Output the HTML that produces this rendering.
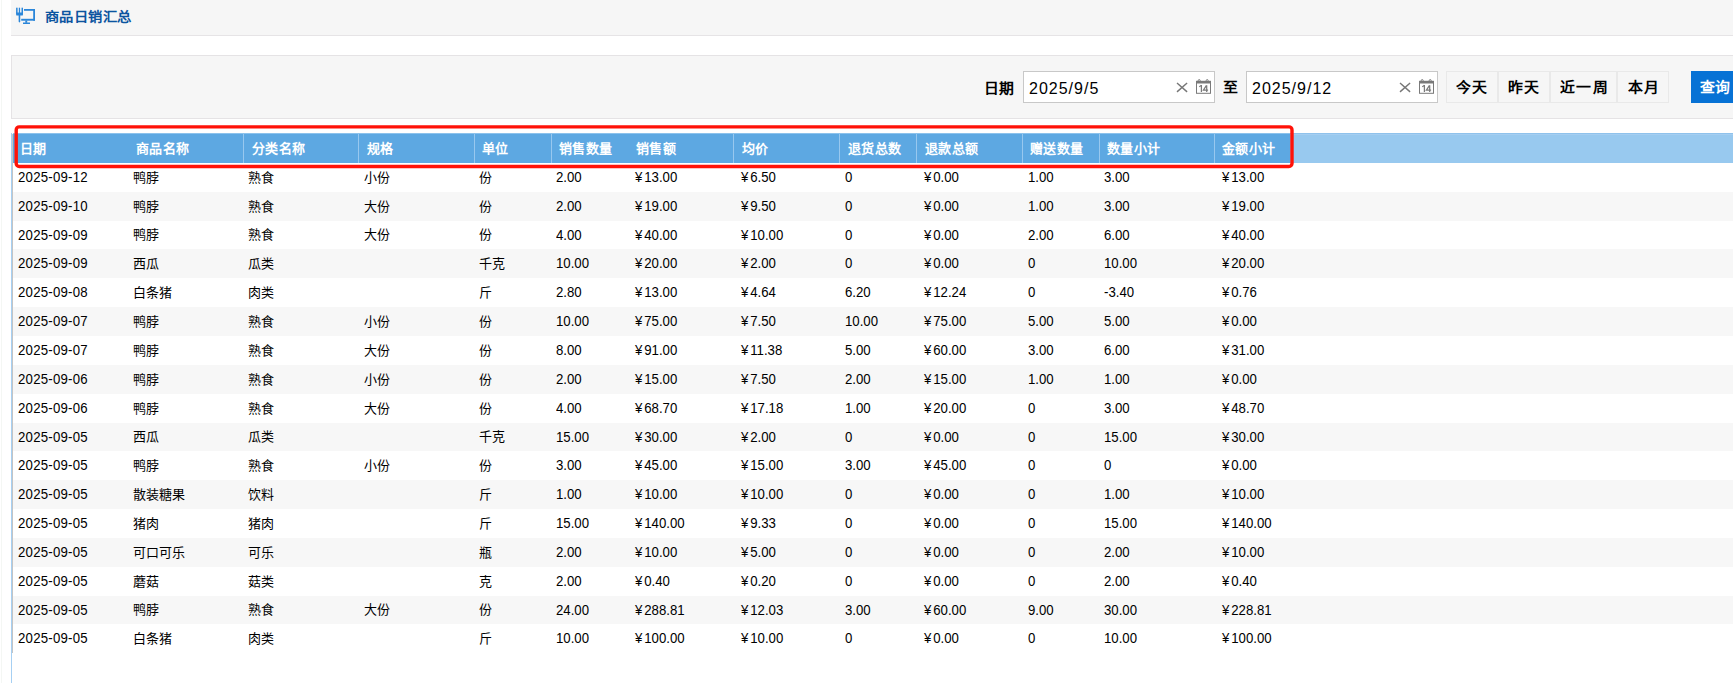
<!DOCTYPE html><html lang="zh-CN"><head><meta charset="utf-8"><style>
*{margin:0;padding:0;box-sizing:border-box}
html,body{width:1733px;height:683px;overflow:hidden;background:#fff}
body{position:relative;font-family:"Liberation Sans",sans-serif;color:#000}
.abs{position:absolute}
#edge{left:1px;top:0;width:1px;height:683px;background:#f4f7f4}
#hdr{left:11px;top:0;width:1722px;height:36px;background:#f6f6f6;border-bottom:1px solid #e6e4e6}
#title{left:44.5px;top:8.5px;letter-spacing:0.1px;transform:scaleX(1.1);transform-origin:0 0;font-size:13px;font-weight:900;color:#0c55a0;line-height:16px;white-space:nowrap}
#panel{left:11px;top:55px;width:1740px;height:64px;background:#f6f6f6;border:1px solid #e5e3e5}
.lbl{font-size:13.5px;letter-spacing:0.8px;transform:scaleX(1.1);transform-origin:0 0;font-weight:bold;line-height:16px;white-space:nowrap}
.inp{height:32px;width:192px;background:#fff;border:1px solid #c8c8c8}
.inp span{position:absolute;left:5px;top:8px;letter-spacing:1px;font-size:16px;line-height:18px;color:#000;white-space:nowrap}
.btn{top:71px;height:32px;background:#f6f6f6;border:1px solid #e9e9e9}
.bt{top:80px;font-size:13.5px;letter-spacing:1.8px;transform:scaleX(1.1);transform-origin:0 0;font-weight:bold;line-height:16px;white-space:nowrap}
#q{left:1691px;top:71px;width:60px;height:32px;background:#0772d5}
#qt{left:1700px;top:79.5px;color:#fff;letter-spacing:0.8px;transform:scaleX(1.1);transform-origin:0 0;font-size:13.5px;font-weight:bold;line-height:16px;white-space:nowrap}
#lb1{left:11px;top:133px;width:1px;height:550px;background:#a6d0f3}
#lb2{left:12px;top:134px;width:1px;height:519px;background:#c4c4c4}
#th{left:13px;top:133px;width:1277px;height:30px;background:#5da8e2;border-top:1px solid #8cc2ec}
#thx{left:1290px;top:133px;width:443px;height:30px;background:#98c9ef;border-top:1px solid #8fc2ec;box-shadow:inset 0 1px 0 #a5cef1}
.sep{top:134px;width:1px;height:29px;background:#98c8ef}
.ht{top:141.2px;letter-spacing:0.4px;font-size:13px;font-weight:900;color:#fff;line-height:15px;white-space:nowrap}

i{font-style:normal;margin-right:2px}
.zebra{left:13px;width:1720px;background:#f7f7f7}
.c{font-size:13px;}.n{font-size:14px;transform:scaleX(0.943);transform-origin:0 0}.c{line-height:15px;white-space:nowrap;color:#000}
</style></head><body>
<div class="abs" id="edge"></div>
<div class="abs" id="hdr"></div>
<svg class="abs" style="left:10px;top:2px" width="30" height="30" viewBox="0 0 30 30">
<g fill="#2b86d9">
<rect x="6.1" y="5.7" width="1.5" height="6"/><rect x="8.8" y="5.7" width="1.3" height="6"/><rect x="11.5" y="5.7" width="1.5" height="6"/>
<path d="M6.1 10.5H13V12.4A1.2 1.2 0 0 1 11.8 13.6H7.3A1.2 1.2 0 0 1 6.1 12.4Z"/>
<path d="M8.65 13H10.25V19.6A0.8 0.8 0 0 1 8.65 19.6Z"/>
<rect x="14" y="7" width="11" height="1.8"/><rect x="23.2" y="7" width="1.8" height="11.7"/><rect x="11.2" y="16.8" width="13.8" height="1.9"/>
<rect x="15.3" y="18.5" width="1.9" height="2.3"/><rect x="13" y="20.5" width="7" height="1.5"/>
</g></svg>
<div class="abs" id="title">商品日销汇总</div>
<div class="abs" id="panel"></div>
<div class="abs lbl" style="left:984px;top:80.5px">日期</div>
<div class="abs inp" style="left:1023px;top:71px"><span>2025/9/5</span><svg class="abs" style="left:152px;top:10px" width="12" height="11" viewBox="0 0 12 11"><path d="M1 1L11.1 9.9M11.1 1L1 9.9" stroke="#777" stroke-width="1.4" fill="none"/></svg><svg class="abs" style="left:171px;top:7px" width="17" height="16" viewBox="0 0 17 16"><rect x="1.5" y="2.4" width="14" height="11.9" fill="none" stroke="#7a7a7a" stroke-width="1"/><rect x="1" y="1.9" width="15" height="2.6" fill="#7a7a7a"/><rect x="3.2" y="0.6" width="2" height="2.8" rx="1" fill="none" stroke="#7a7a7a" stroke-width="1"/><rect x="11.2" y="0.6" width="2" height="2.8" rx="1" fill="none" stroke="#7a7a7a" stroke-width="1"/><path d="M6.4 6.1V13M4.3 7.9L6.4 6.1M11.7 6.3V13M11.5 6.3L8.4 11.1H13.1" fill="none" stroke="#7a7a7a" stroke-width="1.25"/></svg></div>
<div class="abs lbl" style="left:1223px;top:80px">至</div>
<div class="abs inp" style="left:1246px;top:71px"><span>2025/9/12</span><svg class="abs" style="left:152px;top:10px" width="12" height="11" viewBox="0 0 12 11"><path d="M1 1L11.1 9.9M11.1 1L1 9.9" stroke="#777" stroke-width="1.4" fill="none"/></svg><svg class="abs" style="left:171px;top:7px" width="17" height="16" viewBox="0 0 17 16"><rect x="1.5" y="2.4" width="14" height="11.9" fill="none" stroke="#7a7a7a" stroke-width="1"/><rect x="1" y="1.9" width="15" height="2.6" fill="#7a7a7a"/><rect x="3.2" y="0.6" width="2" height="2.8" rx="1" fill="none" stroke="#7a7a7a" stroke-width="1"/><rect x="11.2" y="0.6" width="2" height="2.8" rx="1" fill="none" stroke="#7a7a7a" stroke-width="1"/><path d="M6.4 6.1V13M4.3 7.9L6.4 6.1M11.7 6.3V13M11.5 6.3L8.4 11.1H13.1" fill="none" stroke="#7a7a7a" stroke-width="1.25"/></svg></div>
<div class="abs btn" style="left:1446px;width:52px"></div>
<div class="abs bt" style="left:1455.5px">今天</div>
<div class="abs btn" style="left:1498px;width:52px"></div>
<div class="abs bt" style="left:1507.5px">昨天</div>
<div class="abs btn" style="left:1550px;width:67px"></div>
<div class="abs bt" style="left:1560.0px">近一周</div>
<div class="abs btn" style="left:1617px;width:52px"></div>
<div class="abs bt" style="left:1627.5px">本月</div>
<div class="abs" id="q"></div><div class="abs" id="qt">查询</div>
<div class="abs zebra" style="top:192px;height:29px"></div>
<div class="abs zebra" style="top:249px;height:29px"></div>
<div class="abs zebra" style="top:307px;height:29px"></div>
<div class="abs zebra" style="top:365px;height:29px"></div>
<div class="abs zebra" style="top:423px;height:28px"></div>
<div class="abs zebra" style="top:480px;height:29px"></div>
<div class="abs zebra" style="top:538px;height:29px"></div>
<div class="abs zebra" style="top:596px;height:28px"></div>
<div class="abs" id="lb1"></div><div class="abs" id="lb2"></div>
<div class="abs" id="th"></div><div class="abs" id="thx"></div>
<div class="abs sep" style="left:243px"></div>
<div class="abs sep" style="left:358px"></div>
<div class="abs sep" style="left:474px"></div>
<div class="abs sep" style="left:551px"></div>
<div class="abs sep" style="left:733px"></div>
<div class="abs sep" style="left:839px"></div>
<div class="abs sep" style="left:916px"></div>
<div class="abs sep" style="left:1022px"></div>
<div class="abs sep" style="left:1099px"></div>
<div class="abs sep" style="left:1214px"></div>
<div class="abs ht" style="left:20px">日期</div>
<div class="abs ht" style="left:136px">商品名称</div>
<div class="abs ht" style="left:252px">分类名称</div>
<div class="abs ht" style="left:367px">规格</div>
<div class="abs ht" style="left:482px">单位</div>
<div class="abs ht" style="left:559px">销售数量</div>
<div class="abs ht" style="left:636px">销售额</div>
<div class="abs ht" style="left:742px">均价</div>
<div class="abs ht" style="left:848px">退货总数</div>
<div class="abs ht" style="left:925px">退款总额</div>
<div class="abs ht" style="left:1030px">赠送数量</div>
<div class="abs ht" style="left:1107px">数量小计</div>
<div class="abs ht" style="left:1222px">金额小计</div>
<div class="abs c n" style="left:18px;top:170.00px;letter-spacing:0.25px">2025-09-12</div>
<div class="abs c k" style="left:133px;top:169.60px">鸭脖</div>
<div class="abs c k" style="left:248px;top:169.60px">熟食</div>
<div class="abs c k" style="left:364px;top:169.60px">小份</div>
<div class="abs c k" style="left:479px;top:169.60px">份</div>
<div class="abs c n" style="left:556px;top:170.00px">2.00</div>
<div class="abs c n" style="left:635px;top:170.00px"><i>¥</i>13.00</div>
<div class="abs c n" style="left:741px;top:170.00px"><i>¥</i>6.50</div>
<div class="abs c n" style="left:845px;top:170.00px">0</div>
<div class="abs c n" style="left:924px;top:170.00px"><i>¥</i>0.00</div>
<div class="abs c n" style="left:1028px;top:170.00px">1.00</div>
<div class="abs c n" style="left:1104px;top:170.00px">3.00</div>
<div class="abs c n" style="left:1222px;top:170.00px"><i>¥</i>13.00</div>
<div class="abs c n" style="left:18px;top:199.00px;letter-spacing:0.25px">2025-09-10</div>
<div class="abs c k" style="left:133px;top:198.60px">鸭脖</div>
<div class="abs c k" style="left:248px;top:198.60px">熟食</div>
<div class="abs c k" style="left:364px;top:198.60px">大份</div>
<div class="abs c k" style="left:479px;top:198.60px">份</div>
<div class="abs c n" style="left:556px;top:199.00px">2.00</div>
<div class="abs c n" style="left:635px;top:199.00px"><i>¥</i>19.00</div>
<div class="abs c n" style="left:741px;top:199.00px"><i>¥</i>9.50</div>
<div class="abs c n" style="left:845px;top:199.00px">0</div>
<div class="abs c n" style="left:924px;top:199.00px"><i>¥</i>0.00</div>
<div class="abs c n" style="left:1028px;top:199.00px">1.00</div>
<div class="abs c n" style="left:1104px;top:199.00px">3.00</div>
<div class="abs c n" style="left:1222px;top:199.00px"><i>¥</i>19.00</div>
<div class="abs c n" style="left:18px;top:227.50px;letter-spacing:0.25px">2025-09-09</div>
<div class="abs c k" style="left:133px;top:227.10px">鸭脖</div>
<div class="abs c k" style="left:248px;top:227.10px">熟食</div>
<div class="abs c k" style="left:364px;top:227.10px">大份</div>
<div class="abs c k" style="left:479px;top:227.10px">份</div>
<div class="abs c n" style="left:556px;top:227.50px">4.00</div>
<div class="abs c n" style="left:635px;top:227.50px"><i>¥</i>40.00</div>
<div class="abs c n" style="left:741px;top:227.50px"><i>¥</i>10.00</div>
<div class="abs c n" style="left:845px;top:227.50px">0</div>
<div class="abs c n" style="left:924px;top:227.50px"><i>¥</i>0.00</div>
<div class="abs c n" style="left:1028px;top:227.50px">2.00</div>
<div class="abs c n" style="left:1104px;top:227.50px">6.00</div>
<div class="abs c n" style="left:1222px;top:227.50px"><i>¥</i>40.00</div>
<div class="abs c n" style="left:18px;top:256.00px;letter-spacing:0.25px">2025-09-09</div>
<div class="abs c k" style="left:133px;top:255.60px">西瓜</div>
<div class="abs c k" style="left:248px;top:255.60px">瓜类</div>
<div class="abs c k" style="left:479px;top:255.60px">千克</div>
<div class="abs c n" style="left:556px;top:256.00px">10.00</div>
<div class="abs c n" style="left:635px;top:256.00px"><i>¥</i>20.00</div>
<div class="abs c n" style="left:741px;top:256.00px"><i>¥</i>2.00</div>
<div class="abs c n" style="left:845px;top:256.00px">0</div>
<div class="abs c n" style="left:924px;top:256.00px"><i>¥</i>0.00</div>
<div class="abs c n" style="left:1028px;top:256.00px">0</div>
<div class="abs c n" style="left:1104px;top:256.00px">10.00</div>
<div class="abs c n" style="left:1222px;top:256.00px"><i>¥</i>20.00</div>
<div class="abs c n" style="left:18px;top:285.00px;letter-spacing:0.25px">2025-09-08</div>
<div class="abs c k" style="left:133px;top:284.60px">白条猪</div>
<div class="abs c k" style="left:248px;top:284.60px">肉类</div>
<div class="abs c k" style="left:479px;top:284.60px">斤</div>
<div class="abs c n" style="left:556px;top:285.00px">2.80</div>
<div class="abs c n" style="left:635px;top:285.00px"><i>¥</i>13.00</div>
<div class="abs c n" style="left:741px;top:285.00px"><i>¥</i>4.64</div>
<div class="abs c n" style="left:845px;top:285.00px">6.20</div>
<div class="abs c n" style="left:924px;top:285.00px"><i>¥</i>12.24</div>
<div class="abs c n" style="left:1028px;top:285.00px">0</div>
<div class="abs c n" style="left:1104px;top:285.00px">-3.40</div>
<div class="abs c n" style="left:1222px;top:285.00px"><i>¥</i>0.76</div>
<div class="abs c n" style="left:18px;top:314.00px;letter-spacing:0.25px">2025-09-07</div>
<div class="abs c k" style="left:133px;top:313.60px">鸭脖</div>
<div class="abs c k" style="left:248px;top:313.60px">熟食</div>
<div class="abs c k" style="left:364px;top:313.60px">小份</div>
<div class="abs c k" style="left:479px;top:313.60px">份</div>
<div class="abs c n" style="left:556px;top:314.00px">10.00</div>
<div class="abs c n" style="left:635px;top:314.00px"><i>¥</i>75.00</div>
<div class="abs c n" style="left:741px;top:314.00px"><i>¥</i>7.50</div>
<div class="abs c n" style="left:845px;top:314.00px">10.00</div>
<div class="abs c n" style="left:924px;top:314.00px"><i>¥</i>75.00</div>
<div class="abs c n" style="left:1028px;top:314.00px">5.00</div>
<div class="abs c n" style="left:1104px;top:314.00px">5.00</div>
<div class="abs c n" style="left:1222px;top:314.00px"><i>¥</i>0.00</div>
<div class="abs c n" style="left:18px;top:343.00px;letter-spacing:0.25px">2025-09-07</div>
<div class="abs c k" style="left:133px;top:342.60px">鸭脖</div>
<div class="abs c k" style="left:248px;top:342.60px">熟食</div>
<div class="abs c k" style="left:364px;top:342.60px">大份</div>
<div class="abs c k" style="left:479px;top:342.60px">份</div>
<div class="abs c n" style="left:556px;top:343.00px">8.00</div>
<div class="abs c n" style="left:635px;top:343.00px"><i>¥</i>91.00</div>
<div class="abs c n" style="left:741px;top:343.00px"><i>¥</i>11.38</div>
<div class="abs c n" style="left:845px;top:343.00px">5.00</div>
<div class="abs c n" style="left:924px;top:343.00px"><i>¥</i>60.00</div>
<div class="abs c n" style="left:1028px;top:343.00px">3.00</div>
<div class="abs c n" style="left:1104px;top:343.00px">6.00</div>
<div class="abs c n" style="left:1222px;top:343.00px"><i>¥</i>31.00</div>
<div class="abs c n" style="left:18px;top:372.00px;letter-spacing:0.25px">2025-09-06</div>
<div class="abs c k" style="left:133px;top:371.60px">鸭脖</div>
<div class="abs c k" style="left:248px;top:371.60px">熟食</div>
<div class="abs c k" style="left:364px;top:371.60px">小份</div>
<div class="abs c k" style="left:479px;top:371.60px">份</div>
<div class="abs c n" style="left:556px;top:372.00px">2.00</div>
<div class="abs c n" style="left:635px;top:372.00px"><i>¥</i>15.00</div>
<div class="abs c n" style="left:741px;top:372.00px"><i>¥</i>7.50</div>
<div class="abs c n" style="left:845px;top:372.00px">2.00</div>
<div class="abs c n" style="left:924px;top:372.00px"><i>¥</i>15.00</div>
<div class="abs c n" style="left:1028px;top:372.00px">1.00</div>
<div class="abs c n" style="left:1104px;top:372.00px">1.00</div>
<div class="abs c n" style="left:1222px;top:372.00px"><i>¥</i>0.00</div>
<div class="abs c n" style="left:18px;top:401.00px;letter-spacing:0.25px">2025-09-06</div>
<div class="abs c k" style="left:133px;top:400.60px">鸭脖</div>
<div class="abs c k" style="left:248px;top:400.60px">熟食</div>
<div class="abs c k" style="left:364px;top:400.60px">大份</div>
<div class="abs c k" style="left:479px;top:400.60px">份</div>
<div class="abs c n" style="left:556px;top:401.00px">4.00</div>
<div class="abs c n" style="left:635px;top:401.00px"><i>¥</i>68.70</div>
<div class="abs c n" style="left:741px;top:401.00px"><i>¥</i>17.18</div>
<div class="abs c n" style="left:845px;top:401.00px">1.00</div>
<div class="abs c n" style="left:924px;top:401.00px"><i>¥</i>20.00</div>
<div class="abs c n" style="left:1028px;top:401.00px">0</div>
<div class="abs c n" style="left:1104px;top:401.00px">3.00</div>
<div class="abs c n" style="left:1222px;top:401.00px"><i>¥</i>48.70</div>
<div class="abs c n" style="left:18px;top:429.50px;letter-spacing:0.25px">2025-09-05</div>
<div class="abs c k" style="left:133px;top:429.10px">西瓜</div>
<div class="abs c k" style="left:248px;top:429.10px">瓜类</div>
<div class="abs c k" style="left:479px;top:429.10px">千克</div>
<div class="abs c n" style="left:556px;top:429.50px">15.00</div>
<div class="abs c n" style="left:635px;top:429.50px"><i>¥</i>30.00</div>
<div class="abs c n" style="left:741px;top:429.50px"><i>¥</i>2.00</div>
<div class="abs c n" style="left:845px;top:429.50px">0</div>
<div class="abs c n" style="left:924px;top:429.50px"><i>¥</i>0.00</div>
<div class="abs c n" style="left:1028px;top:429.50px">0</div>
<div class="abs c n" style="left:1104px;top:429.50px">15.00</div>
<div class="abs c n" style="left:1222px;top:429.50px"><i>¥</i>30.00</div>
<div class="abs c n" style="left:18px;top:458.00px;letter-spacing:0.25px">2025-09-05</div>
<div class="abs c k" style="left:133px;top:457.60px">鸭脖</div>
<div class="abs c k" style="left:248px;top:457.60px">熟食</div>
<div class="abs c k" style="left:364px;top:457.60px">小份</div>
<div class="abs c k" style="left:479px;top:457.60px">份</div>
<div class="abs c n" style="left:556px;top:458.00px">3.00</div>
<div class="abs c n" style="left:635px;top:458.00px"><i>¥</i>45.00</div>
<div class="abs c n" style="left:741px;top:458.00px"><i>¥</i>15.00</div>
<div class="abs c n" style="left:845px;top:458.00px">3.00</div>
<div class="abs c n" style="left:924px;top:458.00px"><i>¥</i>45.00</div>
<div class="abs c n" style="left:1028px;top:458.00px">0</div>
<div class="abs c n" style="left:1104px;top:458.00px">0</div>
<div class="abs c n" style="left:1222px;top:458.00px"><i>¥</i>0.00</div>
<div class="abs c n" style="left:18px;top:487.00px;letter-spacing:0.25px">2025-09-05</div>
<div class="abs c k" style="left:133px;top:486.60px">散装糖果</div>
<div class="abs c k" style="left:248px;top:486.60px">饮料</div>
<div class="abs c k" style="left:479px;top:486.60px">斤</div>
<div class="abs c n" style="left:556px;top:487.00px">1.00</div>
<div class="abs c n" style="left:635px;top:487.00px"><i>¥</i>10.00</div>
<div class="abs c n" style="left:741px;top:487.00px"><i>¥</i>10.00</div>
<div class="abs c n" style="left:845px;top:487.00px">0</div>
<div class="abs c n" style="left:924px;top:487.00px"><i>¥</i>0.00</div>
<div class="abs c n" style="left:1028px;top:487.00px">0</div>
<div class="abs c n" style="left:1104px;top:487.00px">1.00</div>
<div class="abs c n" style="left:1222px;top:487.00px"><i>¥</i>10.00</div>
<div class="abs c n" style="left:18px;top:516.00px;letter-spacing:0.25px">2025-09-05</div>
<div class="abs c k" style="left:133px;top:515.60px">猪肉</div>
<div class="abs c k" style="left:248px;top:515.60px">猪肉</div>
<div class="abs c k" style="left:479px;top:515.60px">斤</div>
<div class="abs c n" style="left:556px;top:516.00px">15.00</div>
<div class="abs c n" style="left:635px;top:516.00px"><i>¥</i>140.00</div>
<div class="abs c n" style="left:741px;top:516.00px"><i>¥</i>9.33</div>
<div class="abs c n" style="left:845px;top:516.00px">0</div>
<div class="abs c n" style="left:924px;top:516.00px"><i>¥</i>0.00</div>
<div class="abs c n" style="left:1028px;top:516.00px">0</div>
<div class="abs c n" style="left:1104px;top:516.00px">15.00</div>
<div class="abs c n" style="left:1222px;top:516.00px"><i>¥</i>140.00</div>
<div class="abs c n" style="left:18px;top:545.00px;letter-spacing:0.25px">2025-09-05</div>
<div class="abs c k" style="left:133px;top:544.60px">可口可乐</div>
<div class="abs c k" style="left:248px;top:544.60px">可乐</div>
<div class="abs c k" style="left:479px;top:544.60px">瓶</div>
<div class="abs c n" style="left:556px;top:545.00px">2.00</div>
<div class="abs c n" style="left:635px;top:545.00px"><i>¥</i>10.00</div>
<div class="abs c n" style="left:741px;top:545.00px"><i>¥</i>5.00</div>
<div class="abs c n" style="left:845px;top:545.00px">0</div>
<div class="abs c n" style="left:924px;top:545.00px"><i>¥</i>0.00</div>
<div class="abs c n" style="left:1028px;top:545.00px">0</div>
<div class="abs c n" style="left:1104px;top:545.00px">2.00</div>
<div class="abs c n" style="left:1222px;top:545.00px"><i>¥</i>10.00</div>
<div class="abs c n" style="left:18px;top:574.00px;letter-spacing:0.25px">2025-09-05</div>
<div class="abs c k" style="left:133px;top:573.60px">蘑菇</div>
<div class="abs c k" style="left:248px;top:573.60px">菇类</div>
<div class="abs c k" style="left:479px;top:573.60px">克</div>
<div class="abs c n" style="left:556px;top:574.00px">2.00</div>
<div class="abs c n" style="left:635px;top:574.00px"><i>¥</i>0.40</div>
<div class="abs c n" style="left:741px;top:574.00px"><i>¥</i>0.20</div>
<div class="abs c n" style="left:845px;top:574.00px">0</div>
<div class="abs c n" style="left:924px;top:574.00px"><i>¥</i>0.00</div>
<div class="abs c n" style="left:1028px;top:574.00px">0</div>
<div class="abs c n" style="left:1104px;top:574.00px">2.00</div>
<div class="abs c n" style="left:1222px;top:574.00px"><i>¥</i>0.40</div>
<div class="abs c n" style="left:18px;top:602.50px;letter-spacing:0.25px">2025-09-05</div>
<div class="abs c k" style="left:133px;top:602.10px">鸭脖</div>
<div class="abs c k" style="left:248px;top:602.10px">熟食</div>
<div class="abs c k" style="left:364px;top:602.10px">大份</div>
<div class="abs c k" style="left:479px;top:602.10px">份</div>
<div class="abs c n" style="left:556px;top:602.50px">24.00</div>
<div class="abs c n" style="left:635px;top:602.50px"><i>¥</i>288.81</div>
<div class="abs c n" style="left:741px;top:602.50px"><i>¥</i>12.03</div>
<div class="abs c n" style="left:845px;top:602.50px">3.00</div>
<div class="abs c n" style="left:924px;top:602.50px"><i>¥</i>60.00</div>
<div class="abs c n" style="left:1028px;top:602.50px">9.00</div>
<div class="abs c n" style="left:1104px;top:602.50px">30.00</div>
<div class="abs c n" style="left:1222px;top:602.50px"><i>¥</i>228.81</div>
<div class="abs c n" style="left:18px;top:631.00px;letter-spacing:0.25px">2025-09-05</div>
<div class="abs c k" style="left:133px;top:630.60px">白条猪</div>
<div class="abs c k" style="left:248px;top:630.60px">肉类</div>
<div class="abs c k" style="left:479px;top:630.60px">斤</div>
<div class="abs c n" style="left:556px;top:631.00px">10.00</div>
<div class="abs c n" style="left:635px;top:631.00px"><i>¥</i>100.00</div>
<div class="abs c n" style="left:741px;top:631.00px"><i>¥</i>10.00</div>
<div class="abs c n" style="left:845px;top:631.00px">0</div>
<div class="abs c n" style="left:924px;top:631.00px"><i>¥</i>0.00</div>
<div class="abs c n" style="left:1028px;top:631.00px">0</div>
<div class="abs c n" style="left:1104px;top:631.00px">10.00</div>
<div class="abs c n" style="left:1222px;top:631.00px"><i>¥</i>100.00</div>
<svg class="abs" style="left:0;top:0" width="1733" height="683"><rect x="16.2" y="126.9" width="1275.8" height="39.6" rx="3" ry="3" fill="none" stroke="#ff1208" stroke-width="3.4"/></svg>
</body></html>
